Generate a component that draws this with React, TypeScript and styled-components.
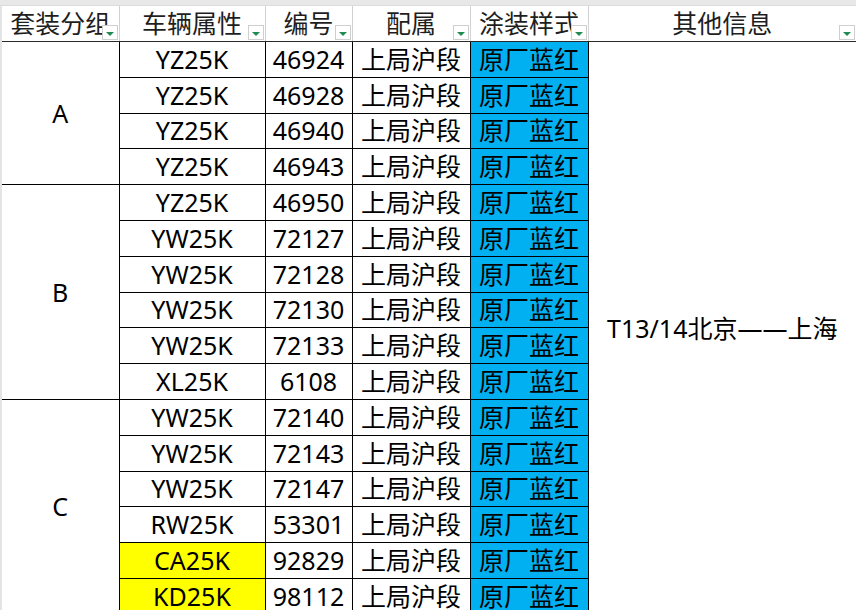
import React from "react";
import styled, { createGlobalStyle } from "styled-components";

const Global = createGlobalStyle`
  html, body { margin: 0; padding: 0; background: #ffffff; overflow: hidden; }
  body { font-family: "Noto Sans", "Noto Sans CJK SC", sans-serif; }
`;

const Sheet = styled.div`
  width: 856px;
  height: 610px;
  overflow: hidden;
  background: #ffffff;
  display: flex;
  flex-direction: column;
`;

const TopStrip = styled.div`
  height: 5px;
  flex: none;
  background: #e8e8e8;
  border-bottom: 1px solid #dcdcdc;
`;

const Frame = styled.div`
  flex: 1;
  border-left: 2px solid #e4e4e4;
  overflow: hidden;
`;

const Table = styled.table`
  border-collapse: collapse;
  table-layout: fixed;
  width: 854px;
  font-size: 25px;
  color: #000;
`;

const HeadCell = styled.th`
  position: relative;
  height: 35px;
  padding: 0;
  font-weight: 400;
  color: #1e1e1e;
  text-align: center;
  vertical-align: middle;
  white-space: nowrap;
  overflow: hidden;
  line-height: 1;
  border-right: 1px solid #d2d2d2;
  border-bottom: 1px solid #2a2a2a;
  &:last-child { border-right: none; }
`;

const FilterButton = styled.span`
  position: absolute;
  right: 1px;
  bottom: 1px;
  width: 16px;
  height: 15px;
  box-sizing: border-box;
  background: #ffffff;
  border: 1px solid #cfcfcf;
  display: flex;
  align-items: center;
  justify-content: center;
  &::after {
    content: "";
    width: 0;
    height: 0;
    border-left: 4px solid transparent;
    border-right: 4px solid transparent;
    border-top: 4px solid #1f8a52;
    margin-top: 2px;
  }
`;

const Row = styled.tr`
  height: 35.8px;
`;

const Cell = styled.td<{ $bg?: string }>`
  padding: 0;
  text-align: center;
  vertical-align: middle;
  white-space: nowrap;
  overflow: hidden;
  line-height: 1;
  border: 1px solid #000;
  background: ${(p) => p.$bg ?? "transparent"};
`;

const GroupCell = styled(Cell)`
  border-left: none;
`;

const InfoCell = styled(Cell)`
  border-right: none;
  border-bottom: none;
`;

type Car = { type: string; no: string; yellow?: boolean };
type Group = { name: string; cars: Car[] };

const groups: Group[] = [
  {
    name: "A",
    cars: [
      { type: "YZ25K", no: "46924" },
      { type: "YZ25K", no: "46928" },
      { type: "YZ25K", no: "46940" },
      { type: "YZ25K", no: "46943" },
    ],
  },
  {
    name: "B",
    cars: [
      { type: "YZ25K", no: "46950" },
      { type: "YW25K", no: "72127" },
      { type: "YW25K", no: "72128" },
      { type: "YW25K", no: "72130" },
      { type: "YW25K", no: "72133" },
      { type: "XL25K", no: "6108" },
    ],
  },
  {
    name: "C",
    cars: [
      { type: "YW25K", no: "72140" },
      { type: "YW25K", no: "72143" },
      { type: "YW25K", no: "72147" },
      { type: "RW25K", no: "53301" },
      { type: "CA25K", no: "92829", yellow: true },
      { type: "KD25K", no: "98112", yellow: true },
    ],
  },
];

const headers = ["套装分组", "车辆属性", "编号", "配属", "涂装样式", "其他信息"];
const widths = [117, 146, 87, 118, 118, 268];
const totalRows = groups.reduce((n, g) => n + g.cars.length, 0);

export default function App() {
  let first = true;
  return (
    <Sheet>
      <Global />
      <TopStrip />
      <Frame>
        <Table>
          <colgroup>
            {widths.map((w, i) => (
              <col key={i} style={{ width: w }} />
            ))}
          </colgroup>
          <thead>
            <tr>
              {headers.map((h) => (
                <HeadCell key={h}>
                  {h}
                  <FilterButton />
                </HeadCell>
              ))}
            </tr>
          </thead>
          <tbody>
            {groups.map((g) =>
              g.cars.map((c, i) => {
                const showInfo = first;
                first = false;
                return (
                  <Row key={g.name + c.no}>
                    {i === 0 && <GroupCell rowSpan={g.cars.length}>{g.name}</GroupCell>}
                    <Cell $bg={c.yellow ? "#ffff00" : undefined}>{c.type}</Cell>
                    <Cell>{c.no}</Cell>
                    <Cell>上局沪段</Cell>
                    <Cell $bg="#00b0f0">原厂蓝红</Cell>
                    {showInfo && <InfoCell rowSpan={totalRows}>T13/14北京——上海</InfoCell>}
                  </Row>
                );
              })
            )}
          </tbody>
        </Table>
      </Frame>
    </Sheet>
  );
}
